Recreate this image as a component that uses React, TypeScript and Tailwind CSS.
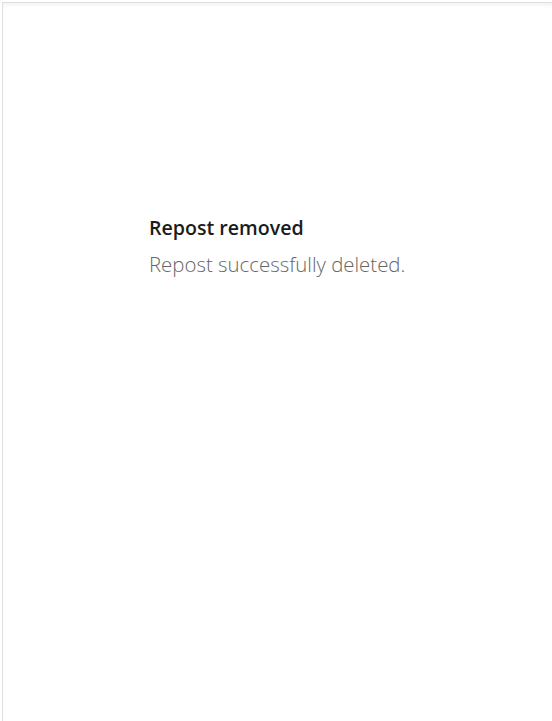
export default function App() {
  return (
    <div className="h-[721px] w-[552px] bg-white pt-[2px] pl-[2px]">
      <div className="flex h-full flex-col border-t border-l border-[#e0e0e0] bg-white shadow-[inset_0_4px_4px_-2px_rgba(0,0,0,0.06)]">
        <div className="pl-[146px] pt-[211px] font-['Open_Sans',sans-serif]">
          <h1 className="text-[19.6px] leading-[28px] font-semibold text-[#1b1b1b]">Repost removed</h1>
          <p className="mt-[8px] text-[20.4px] leading-[28px] font-light text-[#666666]">
            Repost successfully deleted.
          </p>
        </div>
      </div>
    </div>
  );
}
